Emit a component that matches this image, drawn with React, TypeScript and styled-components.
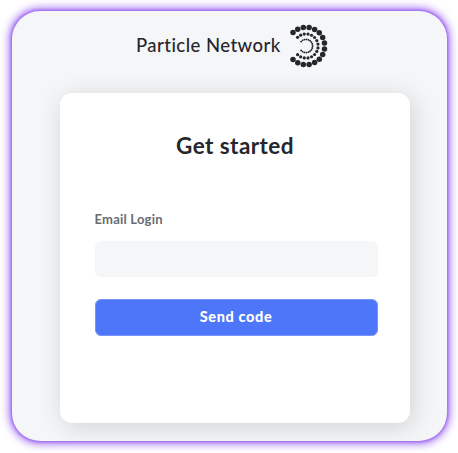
import React from 'react';
import styled, { createGlobalStyle } from 'styled-components';

const GlobalStyle = createGlobalStyle`
  * { box-sizing: border-box; }
  html, body { margin: 0; background: #fff; overflow: hidden; }
  body { font-family: Lato, "Open Sans", sans-serif; color: #25272c; }
`;

const Page = styled.main`
  width: 458px;
  height: 453px;
  padding: 11px 11px 12px 12px;
`;

const Frame = styled.section`
  width: 435px;
  height: 430px;
  border-radius: 28px;
  background: #f5f6f8;
  box-shadow: 0 0 3px 1px #9c66f2, 0 0 8px 3px #a876f4;
  overflow: hidden;
`;

const Brand = styled.header`
  display: flex;
  align-items: center;
  height: 82px;
  padding: 0 0 13px 124px;
`;

const BrandName = styled.span`
  width: 153px;
  padding-bottom: 1px;
  font-size: 18.5px;
  font-weight: 500;
  line-height: 24px;
  letter-spacing: 0.45px;
  white-space: nowrap;
`;

const Mark = styled.svg`
  display: block;
  width: 40px;
  height: 48px;
  fill: #25262a;
`;

const Card = styled.form`
  display: flex;
  flex-direction: column;
  width: 350px;
  height: 330px;
  margin-left: 48px;
  padding: 39px 32.5px 0 34.5px;
  border-radius: 12px;
  background: #fff;
  box-shadow: 3px 4px 26px rgba(0, 0, 0, 0.15);
`;

const Title = styled.h1`
  margin: 0 2px 0 0;
  font-size: 22.5px;
  line-height: 28px;
  font-weight: 700;
  letter-spacing: 0.45px;
  text-align: center;
`;

const Label = styled.label`
  margin-top: 50px;
  color: #6a6c72;
  font-size: 13px;
  line-height: 18px;
  font-weight: 700;
  letter-spacing: 0.22px;
`;

const Input = styled.input`
  width: 100%;
  height: 36px;
  margin-top: 13px;
  padding: 0 12px;
  border: 0;
  border-radius: 6px;
  outline: 0;
  background: #f5f6f8;
  font: inherit;
`;

const Button = styled.button`
  height: 37px;
  margin-top: 22px;
  padding: 0 0 1px;
  border: 1px solid #7894fa;
  border-radius: 6px;
  background: #4e76f8;
  color: #fff;
  font: 900 14.5px/20px Lato, sans-serif;
  letter-spacing: 0.62px;
`;

const rings = [
  { radius: 18.7, dot: 2.75, count: 16, sweep: 134 },
  { radius: 12.1, dot: 1.6, count: 16, sweep: 134 },
  { radius: 6.6, dot: 0.95, count: 17, sweep: 138 },
];

const dots = rings.flatMap(({ radius, dot, count, sweep }) =>
  Array.from({ length: count }, (_, i) => {
    const angle = ((-sweep + (2 * sweep * i) / (count - 1)) * Math.PI) / 180;
    return { x: 17 + radius * Math.cos(angle), y: 24 + radius * Math.sin(angle), r: dot };
  }),
);

export default function App() {
  return (
    <Page>
      <GlobalStyle />
      <Frame>
        <Brand>
          <BrandName>Particle Network</BrandName>
          <Mark viewBox="0 0 40 48" aria-hidden="true">
            {dots.map((d, i) => (
              <circle key={i} cx={d.x} cy={d.y} r={d.r} />
            ))}
          </Mark>
        </Brand>
        <Card>
          <Title>Get started</Title>
          <Label htmlFor="email">Email Login</Label>
          <Input id="email" type="email" />
          <Button type="button">Send code</Button>
        </Card>
      </Frame>
    </Page>
  );
}
